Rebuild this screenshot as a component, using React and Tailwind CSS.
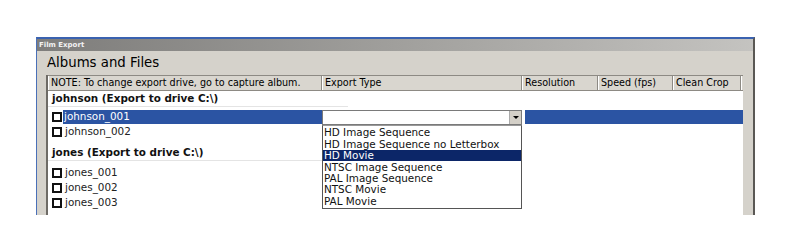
const font = { fontFamily: '"DejaVu Sans", Verdana, sans-serif' };

const groups = [
  { name: 'johnson (Export to drive C:\\)', files: ['johnson_001', 'johnson_002'], gap: 'h-[3px]' },
  { name: 'jones (Export to drive C:\\)', files: ['jones_001', 'jones_002', 'jones_003'], gap: 'h-[5px]' },
];

const options = [
  'HD Image Sequence',
  'HD Image Sequence no Letterbox',
  'HD Movie',
  'NTSC Image Sequence',
  'PAL Image Sequence',
  'NTSC Movie',
  'PAL Movie',
];

function Checkbox() {
  return <span className="inline-block w-[10px] h-[10px] border-2 border-[#111] bg-white shrink-0" />;
}

function HeaderCell({ children, w }) {
  return (
    <div
      className={`${w} h-[14px] flex items-center pl-[2px] border-r border-[#8d8a84] border-l border-l-white text-[9.6px] text-black leading-none whitespace-nowrap`}
    >
      {children}
    </div>
  );
}

function Dropdown() {
  return (
    <div className="absolute left-[274px] top-0 w-[200px] z-10">
      <div className="h-[15px] bg-white border border-[#7a7a7a] flex justify-end">
        <div className="w-[12px] h-[13px] bg-[#d4d0c8] border-l border-[#aaa] flex items-center justify-center">
          <span className="w-0 h-0 border-l-[3px] border-r-[3px] border-t-[3px] border-l-transparent border-r-transparent border-t-black" />
        </div>
      </div>
      <div className="bg-white border border-[#555] border-t-[#999] py-[1px]">
        {options.map((o, i) => (
          <div
            key={o}
            className={`h-[11.4px] flex items-center pl-[1px] text-[10.4px] leading-none whitespace-nowrap ${
              i === 2 ? 'bg-[#0c2668] text-white' : 'text-[#111]'
            }`}
          >
            {o}
          </div>
        ))}
      </div>
    </div>
  );
}

function FileRow({ name, selected }) {
  return (
    <div className="relative flex items-center h-[14px] mb-[1px]">
      <div className="w-[4px]" />
      <Checkbox />
      <div className="w-[1px]" />
      {selected ? (
        <>
          <div className="w-[260px] h-[14px] bg-[#2b54a3] text-white text-[10.4px] flex items-center pl-[1px]">
            {name}
          </div>
          <div className="w-[202px]" />
          <div className="flex-1 h-[14px] bg-[#2b54a3]" />
          <Dropdown />
        </>
      ) : (
        <div className="text-[10.4px] text-[#222] pl-[2px]">{name}</div>
      )}
    </div>
  );
}

export default function App() {
  return (
    <div className="w-[792px] h-[252px] bg-white relative" style={font}>
      <div className="absolute left-[36px] top-[37px] w-[719px] h-[178px] flex flex-col border-t-2 border-t-[#3a62b0] border-l border-l-[#4a70b8] border-r-2 border-r-[#5a5854] bg-[#d5d2cb]">
        <div className="h-[12px] bg-gradient-to-r from-[#7e7d7b] via-[#a09f9c] to-[#c4c3c0] flex items-center pl-[2px]">
          <span className="text-[7px] font-bold text-[#f2f2f2] leading-none">Film Export</span>
        </div>
        <div className="pl-[10px] pt-[5px] h-[24px] text-[13.3px] text-black leading-none flex items-start">
          Albums and Files
        </div>
        <div className="flex-1 flex flex-col ml-[9px] mr-[10px] border-l-2 border-l-[#6e6b66]">
          <div className="flex border-t border-[#8d8a84] border-b border-b-[#8d8a84] bg-[#d9d6cf]">
            <HeaderCell w="w-[274px]">NOTE: To change export drive, go to capture album.</HeaderCell>
            <HeaderCell w="w-[200px]">Export Type</HeaderCell>
            <HeaderCell w="w-[76px]">Resolution</HeaderCell>
            <HeaderCell w="w-[75px]">Speed (fps)</HeaderCell>
            <HeaderCell w="w-[68px]">Clean Crop</HeaderCell>
            <div className="flex-1 border-l border-white" />
          </div>
          <div className="flex-1 bg-white">
            {groups.map((g, gi) => (
              <div key={g.name}>
                <div className={`h-[16px] pl-[4px] flex items-center text-[10.4px] font-bold text-[#111] border-b border-[#e4e4e4] w-[300px] ${gi > 0 ? 'mt-[6px]' : ''}`}>
                  {g.name}
                </div>
                <div className={g.gap} />
                {g.files.map((f, fi) => (
                  <FileRow key={f} name={f} selected={gi === 0 && fi === 0} />
                ))}
              </div>
            ))}
          </div>
        </div>
      </div>
    </div>
  );
}
